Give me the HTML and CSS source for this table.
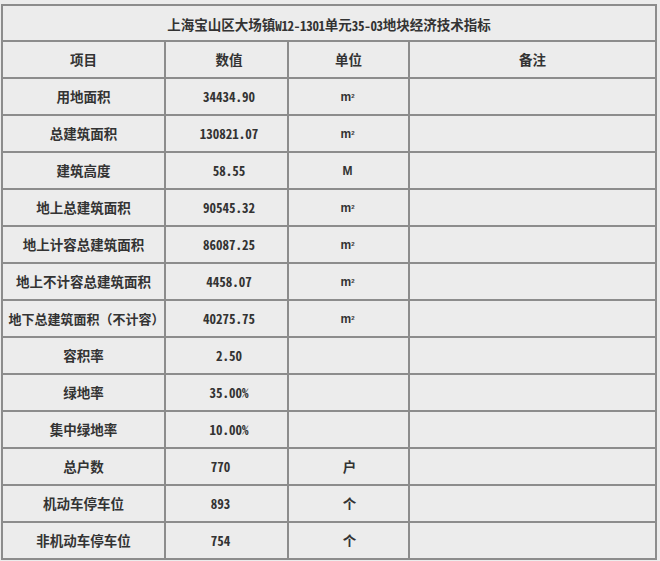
FILE: index.html
```html
<!DOCTYPE html>
<html lang="zh-CN">
<head>
<meta charset="utf-8">
<title>经济技术指标</title>
<link rel="stylesheet" href="styles.css">
</head>
<body>
<div class="sheet">
  <div class="cell title">上海宝山区大场镇<span class="lat">W12-1301</span>单元<span class="lat">35-03</span>地块经济技术指标</div>

  <div class="cell head">项目</div>
  <div class="cell head num-head">数值</div>
  <div class="cell head">单位</div>
  <div class="cell head">备注</div>

  <div class="cell name">用地面积</div>
  <div class="cell num">34434.90</div>
  <div class="cell unit">m<sup>2</sup></div>
  <div class="cell"></div>

  <div class="cell name">总建筑面积</div>
  <div class="cell num">130821.07</div>
  <div class="cell unit">m<sup>2</sup></div>
  <div class="cell"></div>

  <div class="cell name">建筑高度</div>
  <div class="cell num">58.55</div>
  <div class="cell unit">M</div>
  <div class="cell"></div>

  <div class="cell name">地上总建筑面积</div>
  <div class="cell num">90545.32</div>
  <div class="cell unit">m<sup>2</sup></div>
  <div class="cell"></div>

  <div class="cell name">地上计容总建筑面积</div>
  <div class="cell num">86087.25</div>
  <div class="cell unit">m<sup>2</sup></div>
  <div class="cell"></div>

  <div class="cell name">地上不计容总建筑面积</div>
  <div class="cell num">4458.07</div>
  <div class="cell unit">m<sup>2</sup></div>
  <div class="cell"></div>

  <div class="cell name long">地下总建筑面积（不计容）</div>
  <div class="cell num">40275.75</div>
  <div class="cell unit">m<sup>2</sup></div>
  <div class="cell"></div>

  <div class="cell name">容积率</div>
  <div class="cell num">2.50</div>
  <div class="cell unit"></div>
  <div class="cell"></div>

  <div class="cell name">绿地率</div>
  <div class="cell num">35.00%</div>
  <div class="cell unit"></div>
  <div class="cell"></div>

  <div class="cell name">集中绿地率</div>
  <div class="cell num">10.00%</div>
  <div class="cell unit"></div>
  <div class="cell"></div>

  <div class="cell name">总户数</div>
  <div class="cell num int">770</div>
  <div class="cell unit cn">户</div>
  <div class="cell"></div>

  <div class="cell name">机动车停车位</div>
  <div class="cell num int">893</div>
  <div class="cell unit cn">个</div>
  <div class="cell"></div>

  <div class="cell name">非机动车停车位</div>
  <div class="cell num int">754</div>
  <div class="cell unit cn">个</div>
  <div class="cell"></div>
</div>
</body>
</html>
```

FILE: styles.css
```css
html, body {
  margin: 0;
  padding: 0;
  background: #ececec;
}

body {
  padding: 4px 0 0 1px;
  font-family: "Noto Sans CJK SC", "Noto Sans", sans-serif;
  color: #333;
}

.sheet {
  display: grid;
  grid-template-columns: 161px 121px 119px 245px;
  grid-template-rows: 34px repeat(14, 35px);
  gap: 2px;
  padding: 2px;
  width: max-content;
  background: #8c8c8c;
}

.cell {
  background: #ececec;
  display: flex;
  align-items: center;
  justify-content: center;
  white-space: nowrap;
  font-size: 13.5px;
  font-weight: 700;
  line-height: 1;
}

.title {
  grid-column: 1 / -1;
  padding-top: 4px;
  box-sizing: border-box;
  font-size: 13.5px;
}

.title .lat {
  font-family: "Noto Sans Mono CJK SC", "DejaVu Sans Mono", monospace;
  font-size: 13px;
  letter-spacing: -0.3px;
}

.name.long {
  font-size: 13px;
  padding-left: 6px;
}

.num-head {
  padding-left: 5px;
}

.num {
  font-family: "Noto Sans Mono CJK SC", "DejaVu Sans Mono", monospace;
  font-size: 13px;
  font-weight: 700;
  padding-left: 5px;
}

.num.int {
  padding-left: 0;
  padding-right: 12px;
}

.unit {
  font-family: "Liberation Sans", Arial, sans-serif;
  font-size: 12px;
  padding-right: 2px;
}

.unit.cn {
  font-family: "Noto Sans CJK SC", sans-serif;
  font-size: 13.5px;
  padding-left: 4px;
}

.unit sup {
  font-size: 6px;
  position: relative;
  top: -1px;
  vertical-align: super;
}
```
